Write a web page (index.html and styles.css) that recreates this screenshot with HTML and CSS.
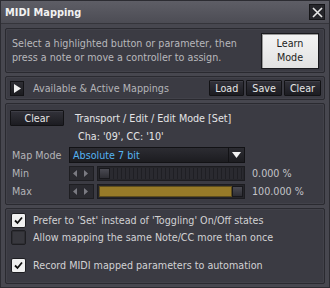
FILE: index.html
```html
<!DOCTYPE html>
<html lang="en">
	<head>
		<meta charset="UTF-8">
		<title>MIDI Mapping</title>
		<link rel="stylesheet" href="styles.css">
	</head>
	<body>
		<div class="window">
			<div class="titlebar">
				<span class="title">MIDI Mapping</span>
				<span class="close">
					<svg width="11" height="11" viewBox="0 0 11 11"><path d="M1 1 L10 10 M10 1 L1 10" stroke="#e8e8e8" stroke-width="1.6"/></svg>
				</span>
			</div>
			<div class="content">
				<!-- intro -->
				<div class="panel intro">
					<p class="hint">Select a highlighted button or parameter, then<br>press a note or move a controller to assign.</p>
					<button class="learn">Learn<br>Mode</button>
				</div>

				<!-- mappings list -->
				<div class="panel mappings">
					<span class="expander">
						<svg width="7" height="9" viewBox="0 0 7 9"><path d="M0 0 L7 4.5 L0 9 Z" fill="#f0f0f0"/></svg>
					</span>
					<span class="label grow">Available &amp; Active Mappings</span>
					<button class="btn">Load</button>
					<button class="btn">Save</button>
					<button class="btn">Clear</button>
				</div>

				<!-- current mapping -->
				<div class="panel edit">
					<div class="row">
						<button class="btn wide">Clear</button>
						<span class="target">Transport / Edit / Edit Mode [Set]</span>
					</div>
					<div class="cha">Cha: '09', CC: '10'</div>
					<div class="grid">
						<span class="label">Map Mode</span>
						<div class="combo">
							<span class="combo-text">Absolute 7 bit</span>
							<span class="combo-arrow">
								<svg width="9" height="6" viewBox="0 0 9 6"><path d="M0 0 L9 0 L4.5 6 Z" fill="#f4f4f4"/></svg>
							</span>
						</div>
						<span></span>

						<span class="label">Min</span>
						<div class="slider-row">
							<span class="spin">
								<svg width="20" height="9" viewBox="0 0 20 9"><path d="M1 4.5 L5 1 L5 8 Z M12 1 L16 4.5 L12 8 Z" fill="#7a7a82"/></svg>
							</span>
							<div class="slider">
								<span class="knob"></span>
								<span class="ticks"></span>
							</div>
						</div>
						<span class="value">0.000 %</span>

						<span class="label">Max</span>
						<div class="slider-row">
							<span class="spin">
								<svg width="20" height="9" viewBox="0 0 20 9"><path d="M1 4.5 L5 1 L5 8 Z M12 1 L16 4.5 L12 8 Z" fill="#7a7a82"/></svg>
							</span>
							<div class="slider">
								<span class="fill"></span>
								<span class="knob"></span>
							</div>
						</div>
						<span class="value">100.000 %</span>
					</div>
				</div>

				<!-- options -->
				<div class="panel options">
					<label class="check"><span class="box on"></span>Prefer to 'Set' instead of 'Toggling' On/Off states</label>
					<label class="check"><span class="box"></span>Allow mapping the same Note/CC more than once</label>
					<label class="check gap"><span class="box on"></span>Record MIDI mapped parameters to automation</label>
				</div>
			</div>
		</div>
	</body>
</html>
```

FILE: styles.css
```css
html, body {
	margin: 0;
	padding: 0;
	background: #2a2a30;
}

body {
	font-family: "DejaVu Sans", sans-serif;
	font-size: 9.6px;
	color: #c4c4c8;
}

.window {
	width: 330px;
	height: 288px;
	box-sizing: border-box;
	background: #47474f;
	border: 1px solid #2c2c32;
	display: flex;
	flex-direction: column;
}

.titlebar {
	height: 23px;
	box-sizing: border-box;
	display: flex;
	align-items: center;
	justify-content: space-between;
	padding: 0 4px 0 4px;
	background: linear-gradient(#5e5e66, #4c4c54);
	border-bottom: 1px solid #35353b;
}

.title {
	font-weight: bold;
	font-size: 9.8px;
	color: #f2f2f2;
}

.close {
	width: 16px;
	height: 16px;
	box-sizing: border-box;
	background: #26262b;
	border: 1px solid #151518;
	display: flex;
	align-items: center;
	justify-content: center;
}

.content {
	flex: 1;
	padding: 4px 4px 3px 4px;
	display: flex;
	flex-direction: column;
	gap: 3px;
}

.panel {
	background: #3b3b43;
	border: 1px solid #2a2a30;
	border-radius: 2px;
	box-shadow: inset 0 0 0 1px #42424a;
}

/* intro */
.intro {
	height: 45px;
	box-sizing: border-box;
	display: flex;
	align-items: center;
	justify-content: space-between;
	padding: 0 5px 0 6px;
}

.hint {
	margin: 0;
	line-height: 14px;
	color: #b8b8bc;
}

.learn {
	width: 58px;
	height: 36px;
	padding: 0;
	font-family: inherit;
	font-size: 9.6px;
	line-height: 14px;
	color: #1e1e22;
	background: linear-gradient(#f4f4f4, #e2e2e2);
	border: 1px solid #1a1a1e;
	box-shadow: inset 1px 1px 0 #9a9a9a;
}

/* mapping list bar */
.mappings {
	height: 24px;
	box-sizing: border-box;
	display: flex;
	align-items: center;
	gap: 2px;
	padding: 0 3px 0 4px;
}

.expander {
	width: 14px;
	height: 15px;
	box-sizing: border-box;
	margin-right: 7px;
	background: linear-gradient(#2e2e34, #1c1c20);
	border: 1px solid #131316;
	display: flex;
	align-items: center;
	justify-content: center;
}

.label.grow {
	flex: 1;
	padding-left: 0;
	color: #b4b4b8;
}

.btn {
	height: 16px;
	padding: 0 5px;
	font-family: inherit;
	font-size: 9.6px;
	color: #e6e6e6;
	background: linear-gradient(#32323a, #1c1c21);
	border: 1px solid #121215;
	border-radius: 1px;
	box-shadow: inset 0 1px 0 #3e3e46;
}

.btn.wide {
	width: 54px;
}

/* edit panel */
.edit {
	height: 102px;
	box-sizing: border-box;
	padding: 6px 4px 0 4px;
}

.row {
	display: flex;
	align-items: center;
	gap: 11px;
}

.target {
	color: #e4e4e6;
}

.cha {
	margin: 5px 0 0 68px;
	color: #e4e4e6;
}

.grid {
	margin-top: 5px;
	display: grid;
	grid-template-columns: 59px 176px auto;
	grid-template-rows: 16px 16px 16px;
	row-gap: 2px;
	align-items: center;
}

.label {
	padding-left: 2px;
	color: #b4b4b8;
}

.combo {
	height: 16px;
	box-sizing: border-box;
	display: flex;
	align-items: center;
	background: linear-gradient(#2c2c32, #1c1c20);
	border: 1px solid #121215;
}

.combo-text {
	flex: 1;
	padding-left: 3px;
	color: #56b4f2;
}

.combo-arrow {
	width: 15px;
	height: 100%;
	border-left: 1px solid #121215;
	display: flex;
	align-items: center;
	justify-content: center;
}

.slider-row {
	display: flex;
	gap: 3px;
	height: 15px;
}

.spin {
	width: 25px;
	box-sizing: border-box;
	background: #2a2a30;
	border: 1px solid #1e1e22;
	display: flex;
	align-items: center;
	justify-content: center;
}

.slider {
	flex: 1;
	box-sizing: border-box;
	background: #25252a;
	border: 1px solid #1c1c20;
	display: flex;
	align-items: stretch;
	padding: 1px;
}

.ticks {
	flex: 1;
	background: repeating-linear-gradient(90deg, #2a2a30 0 3px, #1f1f24 3px 4px);
}

.fill {
	flex: 1;
	background-color: #a2852f;
	background-image: radial-gradient(#8a6f22 0.6px, transparent 0.8px);
	background-size: 2px 2px;
	border: 1px solid #5d4d1e;
}

.knob {
	width: 9px;
	background: linear-gradient(#4a4a52, #2e2e34);
	border: 1px solid #18181c;
}

.value {
	padding-left: 7px;
	color: #c4c4c8;
}

/* options */
.options {
	flex: 1;
	padding: 4px 5px;
	display: flex;
	flex-direction: column;
	gap: 2px;
}

.check {
	display: flex;
	align-items: center;
	gap: 7px;
	height: 15px;
	color: #d2d2d4;
}

.check.gap {
	margin-top: 11px;
}

.box {
	width: 15px;
	height: 15px;
	box-sizing: border-box;
	border-radius: 2px;
	background: #38383e;
	border: 1px solid #1e1e22;
	box-shadow: inset 0 0 0 1px #2e2e33;
}

.box.on {
	background: #f0f0f0 url("data:image/svg+xml,%3Csvg xmlns='http://www.w3.org/2000/svg' width='13' height='13'%3E%3Cpath d='M3 6.5 L5.5 9 L10 3.5' fill='none' stroke='%23111' stroke-width='1.8'/%3E%3C/svg%3E") center no-repeat;
	box-shadow: none;
}
```
